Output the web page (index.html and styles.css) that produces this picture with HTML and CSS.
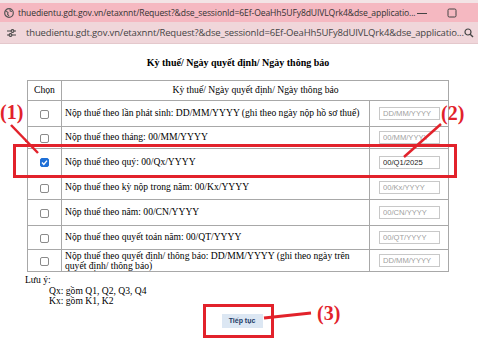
FILE: index.html
```html
<!DOCTYPE html>
<html lang="vi">
<head>
  <meta charset="UTF-8">
  <title>Kỳ thuế</title>
  <link rel="stylesheet" href="styles.css">
</head>
<body>

  <div class="window">
    <!-- Title bar -->
    <div class="titlebar">
      <svg class="globe" width="10" height="10" viewBox="0 0 10 10">
        <circle cx="5" cy="5" r="4.3" fill="none" stroke="#555" stroke-width="1.2"/>
        <path d="M2.2 3.2 L4 4.4 L3.6 6.4 L5 7.8 M6 1.2 L6.2 3 L8 3.6" fill="none" stroke="#555" stroke-width="1.1"/>
      </svg>
      <span class="title-text">thuedientu.gdt.gov.vn/etaxnnt/Request?&amp;dse_sessionId=6Ef-OeaHh5UFy8dUIVLQrk4&amp;dse_applicatio...</span>
      <div class="controls">
        <svg width="12" height="12" viewBox="0 0 12 12"><path d="M1 6.5 H11" stroke="#444" stroke-width="1"/></svg>
        <svg width="12" height="12" viewBox="0 0 12 12"><rect x="2" y="2" width="8" height="8" rx="1.3" fill="none" stroke="#444" stroke-width="1"/></svg>
        <svg width="12" height="12" viewBox="0 0 12 12"><path d="M2 2 L10 10 M10 2 L2 10" stroke="#444" stroke-width="1"/></svg>
      </div>
    </div>

    <!-- Address bar -->
    <div class="addressbar">
      <svg class="tune" width="11" height="10" viewBox="0 0 11 10">
        <path d="M1 3 H5 M8 3 H10 M1 7 H3 M6 7 H10" stroke="#444" stroke-width="1.2"/>
        <circle cx="6.5" cy="3" r="1.4" fill="none" stroke="#444" stroke-width="1.1"/>
        <circle cx="4.5" cy="7" r="1.4" fill="none" stroke="#444" stroke-width="1.1"/>
      </svg>
      <span class="url">thuedientu.gdt.gov.vn/etaxnnt/Request?&amp;dse_sessionId=6Ef-OeaHh5UFy8dUIVLQrk4&amp;dse_applicatio...</span>
      <svg class="zoom-icon" width="10" height="10" viewBox="0 0 10 10">
        <circle cx="4" cy="4" r="3" fill="none" stroke="#444" stroke-width="1.2"/>
        <path d="M6.2 6.2 L9 9" stroke="#444" stroke-width="1.4"/>
      </svg>
    </div>

    <!-- Page -->
    <div class="page">
      <h3 class="heading">Kỳ thuế/ Ngày quyết định/ Ngày thông báo</h3>

      <table class="period-table">
        <colgroup>
          <col class="c-check">
          <col>
          <col class="c-input">
        </colgroup>
        <tr class="head">
          <th class="col-check">Chọn</th>
          <th colspan="2">Kỳ thuế/ Ngày quyết định/ Ngày thông báo</th>
        </tr>
        <tr class="r1">
          <td class="col-check"><span class="box"></span></td>
          <td class="nowrap">Nộp thuế theo lần phát sinh: DD/MM/YYYY (ghi theo ngày nộp hồ sơ thuế)</td>
          <td class="col-input"><input type="text" placeholder="DD/MM/YYYY"></td>
        </tr>
        <tr class="r2">
          <td class="col-check"><span class="box"></span></td>
          <td>Nộp thuế theo tháng: 00/MM/YYYY</td>
          <td class="col-input"><input type="text" placeholder="00/MM/YYYY"></td>
        </tr>
        <tr class="r3">
          <td class="col-check">
            <span class="box checked">
              <svg width="9" height="9" viewBox="0 0 9 9"><path d="M2 4.6 L3.8 6.4 L7 2.6" fill="none" stroke="#fff" stroke-width="1.4"/></svg>
            </span>
          </td>
          <td>Nộp thuế theo quý: 00/Qx/YYYY</td>
          <td class="col-input"><input type="text" value="00/Q1/2025"></td>
        </tr>
        <tr class="r4">
          <td class="col-check"><span class="box"></span></td>
          <td>Nộp thuế theo kỳ nộp trong năm: 00/Kx/YYYY</td>
          <td class="col-input"><input type="text" placeholder="00/Kx/YYYY"></td>
        </tr>
        <tr class="r5">
          <td class="col-check"><span class="box"></span></td>
          <td>Nộp thuế theo năm: 00/CN/YYYY</td>
          <td class="col-input"><input type="text" placeholder="00/CN/YYYY"></td>
        </tr>
        <tr class="r6">
          <td class="col-check"><span class="box"></span></td>
          <td>Nộp thuế theo quyết toán năm: 00/QT/YYYY</td>
          <td class="col-input"><input type="text" placeholder="00/QT/YYYY"></td>
        </tr>
        <tr class="r7">
          <td class="col-check"><span class="box"></span></td>
          <td>Nộp thuế theo quyết định/ thông báo: DD/MM/YYYY (ghi theo ngày trên quyết định/ thông báo)</td>
          <td class="col-input"><input type="text" placeholder="DD/MM/YYYY"></td>
        </tr>
      </table>

      <div class="note">
        <div>Lưu ý:</div>
        <div class="note-item">Qx: gồm Q1, Q2, Q3, Q4</div>
        <div class="note-item">Kx: gồm K1, K2</div>
      </div>

      <div class="actions">
        <button class="btn-next">Tiếp tục</button>
      </div>

      <!-- Annotations -->
      <div class="mark-box row-mark"></div>
      <div class="mark-box btn-mark"></div>
      <span class="mark-label label-1">(1)</span>
      <span class="mark-label label-2">(2)</span>
      <span class="mark-label label-3">(3)</span>
      <svg class="mark-lines" width="478" height="303" viewBox="0 44 478 303">
        <path d="M11 125 L38 153" stroke="#e2222b" stroke-width="2.5"/>
        <path d="M441 124 L404 157" stroke="#e2222b" stroke-width="2.5"/>
        <path d="M264 318 L311 313" stroke="#e2222b" stroke-width="3"/>
      </svg>
    </div>
  </div>

</body>
</html>
```

FILE: styles.css
```css
body {
  margin: 0;
  background: #fff;
  font-family: "Liberation Serif", "Times New Roman", serif;
  color: #000;
  width: 478px;
  height: 347px;
  overflow: hidden;
}

.window {
  width: 478px;
  height: 347px;
  position: relative;
}

/* Browser chrome */
.titlebar {
  height: 22px;
  background: #f5b8c1;
  border-top: 3px solid #f3e4e6;
  box-sizing: border-box;
  display: flex;
  align-items: center;
  padding-left: 4px;
  font-family: "Open Sans", "Noto Sans", sans-serif;
}

.globe {
  flex: none;
  margin-right: 4px;
}

.title-text {
  font-size: 8.6px;
  color: #333;
  white-space: nowrap;
  letter-spacing: -0.12px;
}

.controls {
  margin-left: auto;
  display: flex;
  gap: 18px;
  padding-right: 11px;
}

.addressbar {
  height: 22px;
  background: #f0d6da;
  border-bottom: 1px solid #e4c8cc;
  box-sizing: border-box;
  display: flex;
  align-items: center;
  padding: 0 12px 0 6px;
  font-family: "Open Sans", "Noto Sans", sans-serif;
}

.tune {
  flex: none;
  margin-right: 9px;
}

.url {
  font-size: 9.5px;
  color: #444;
  white-space: nowrap;
  letter-spacing: -0.15px;
}

.zoom-icon {
  margin-left: auto;
  flex: none;
}

/* Page content */
.page {
  padding: 12px 0 0 27px;
  font-size: 9.6px;
}

.heading {
  margin: 0 0 10px;
  width: 422px;
  text-align: center;
  font-size: 10px;
  line-height: 14px;
  font-weight: bold;
}

.period-table {
  width: 422px;
  border-collapse: collapse;
  border: 1px solid #909090;
  font-size: 9.6px;
  table-layout: fixed;
}

.c-check { width: 34px; }
.c-input { width: 79px; }

.period-table th,
.period-table td {
  border: 1px solid #a8a8a8;
  padding: 0 2px 0 3px;
  line-height: 10.5px;
  font-weight: normal;
  text-align: left;
}

.period-table th {
  text-align: center;
  height: 19px;
}

.period-table .col-check {
  text-align: center;
  padding: 0;
}

.period-table .col-input {
  padding: 0 0 0 9px;
}

.period-table .nowrap {
  white-space: nowrap;
}

.r1 td { height: 25px; }
.r2 td { height: 21px; }
.r3 td { height: 26px; }
.r4 td { height: 23px; }
.r5 td { height: 25px; }
.r6 td { height: 23px; }
.r7 td { height: 21px; line-height: 10px; }

.box {
  display: inline-block;
  width: 9px;
  height: 9px;
  box-sizing: border-box;
  border: 1px solid #8a8a8a;
  border-radius: 2px;
  vertical-align: middle;
  background: #fff;
}

.box.checked {
  background: #1f6fd6;
  border-color: #1f6fd6;
  position: relative;
}

.box.checked svg {
  position: absolute;
  left: -1px;
  top: -1px;
}

.col-input input {
  width: 61px;
  height: 13px;
  box-sizing: border-box;
  border: 1px solid #c8c8c8;
  padding: 0 3px;
  font-family: "Liberation Sans", Arial, sans-serif;
  font-size: 7.6px;
  color: #222;
  display: block;
}

.col-input input::placeholder {
  color: #a0a0a0;
}

.note {
  margin-top: 3px;
  margin-left: -2px;
  line-height: 10.5px;
}

.note-item {
  padding-left: 24px;
}

.actions {
  width: 422px;
  text-align: center;
  padding: 7px 0 0 8px;
  box-sizing: border-box;
}

.btn-next {
  border: none;
  background: #dce7f3;
  color: #1e3a66;
  font-family: "Liberation Sans", Arial, sans-serif;
  font-size: 7px;
  font-weight: bold;
  height: 14px;
  width: 41px;
  padding: 0;
}

/* Red annotations */
.mark-box {
  position: absolute;
  border: 3px solid #e2222b;
  box-sizing: border-box;
}

.row-mark {
  left: 13px;
  top: 144px;
  width: 444px;
  height: 34px;
}

.btn-mark {
  left: 203px;
  top: 304px;
  width: 71px;
  height: 34px;
}

.mark-label {
  position: absolute;
  color: #e2222b;
  font-weight: bold;
  font-size: 20px;
  line-height: 20px;
}

.label-1 { left: 0; top: 102px; }
.label-2 { left: 441px; top: 103px; }
.label-3 { left: 317px; top: 303px; }

.mark-lines {
  position: absolute;
  left: 0;
  top: 44px;
}
```
